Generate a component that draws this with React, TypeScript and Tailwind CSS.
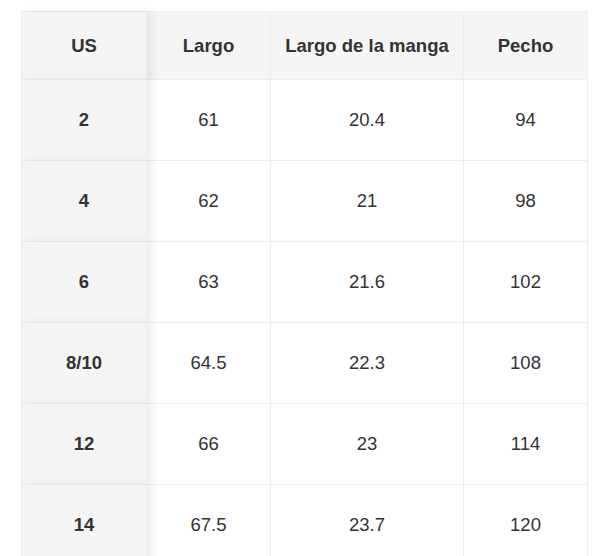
const headers = ['US', 'Largo', 'Largo de la manga', 'Pecho'];

const rows = [
  ['2', '61', '20.4', '94'],
  ['4', '62', '21', '98'],
  ['6', '63', '21.6', '102'],
  ['8/10', '64.5', '22.3', '108'],
  ['12', '66', '23', '114'],
  ['14', '67.5', '23.7', '120'],
];

export default function App() {
  return (
    <div className="h-[556px] w-[600px] overflow-hidden bg-white pl-[21px] pt-[11px] font-['Liberation_Sans',Arial,sans-serif] text-[18.5px] text-[#333]">
      <div className="grid w-[566px] grid-cols-[125px_124px_193px_124px] border-l border-t border-[#ededed]">
        {headers.map((h, i) => (
          <div
            key={h}
            className={`flex h-[68px] items-center justify-center border-b border-r border-[#ededed] bg-[#f5f5f5] font-bold ${i === 0 ? 'relative z-10 shadow-[5px_0_8px_rgba(0,0,0,0.07)]' : ''}`}
          >
            {h}
          </div>
        ))}
        {rows.map((r) =>
          r.map((c, i) => (
            <div
              key={r[0] + '-' + i}
              className={`flex h-[81px] items-center justify-center border-b border-r border-[#ededed] ${i === 0 ? 'relative z-10 bg-[#f5f5f5] font-bold shadow-[5px_0_8px_rgba(0,0,0,0.07)]' : 'bg-white'}`}
            >
              {c}
            </div>
          ))
        )}
      </div>
    </div>
  );
}
